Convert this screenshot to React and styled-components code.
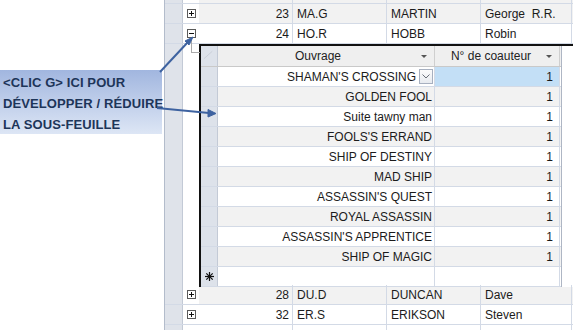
import styled, { createGlobalStyle } from 'styled-components';

const GlobalStyle = createGlobalStyle`
  html, body {
    margin: 0;
    padding: 0;
    background: #fff;
    overflow: hidden;
  }
  body {
    font-family: "Liberation Sans", Arial, sans-serif;
    font-size: 12px;
    color: #1b1b1b;
  }
`;

const outerRows = [
  { id: 23, code: 'MA.G', name: 'MARTIN', first: 'George  R.R.', open: false },
  { id: 24, code: 'HO.R', name: 'HOBB', first: 'Robin', open: true },
];

const afterRows = [
  { id: 28, code: 'DU.D', name: 'DUNCAN', first: 'Dave' },
  { id: 32, code: 'ER.S', name: 'ERIKSON', first: 'Steven' },
];

const books = [
  'SHAMAN\'S CROSSING',
  'GOLDEN FOOL',
  'Suite tawny man',
  'FOOLS\'S ERRAND',
  'SHIP OF DESTINY',
  'MAD SHIP',
  'ASSASSIN\'S QUEST',
  'ROYAL ASSASSIN',
  'ASSASSIN\'S APPRENTICE',
  'SHIP OF MAGIC',
];

const GRID = '#d3dae6';

const Page = styled.div`
  position: relative;
  display: flex;
  width: 579px;
  height: 330px;
  overflow: hidden;
`;

const Side = styled.div`
  width: 164px;
  flex: none;
`;

const Callout = styled.div`
  margin-top: 70px;
  width: 162px;
  height: 64px;
  box-sizing: border-box;
  padding: 2px 0 0 3px;
  background: linear-gradient(#a1b6df, #dde6f5);
  color: #1d3559;
  font-weight: bold;
  font-size: 13px;
  letter-spacing: 0.1px;
  line-height: 21px;
  white-space: nowrap;
`;

const Sheet = styled.div`
  width: 408px;
  flex: none;
  border-left: 1px solid #b3bccb;
`;

const Row = styled.div`
  display: grid;
  grid-template-columns: 18px 16px 94px 94px 94px 91px;
  height: ${(p) => p.$h || 20}px;
  box-sizing: border-box;
  background: ${(p) => (p.$alt ? '#f2f2f2' : '#fff')};
  border-bottom: 1px solid ${GRID};
  overflow: hidden;
`;

const Selector = styled.div`
  background: #dfe3ea;
  border-right: 1px solid #c3cad6;
`;

const Expander = styled.div`
  position: relative;
  display: flex;
  align-items: center;
  padding-left: 4px;
  background: #fff;
`;

const Cell = styled.div`
  display: flex;
  align-items: center;
  justify-content: ${(p) => (p.$right ? 'flex-end' : 'flex-start')};
  padding: ${(p) => (p.$right ? '0 3px 0 0' : '0 0 0 4px')};
  border-right: 1px solid ${GRID};
  white-space: pre;
  line-height: 1;
`;

const OpenBlock = styled.div`
  display: grid;
  grid-template-columns: 18px 16px 374px;
  height: 241px;
`;

const TreeLine = styled.div`
  position: relative;
  &::before {
    content: '';
    position: absolute;
    left: 8px;
    top: -6px;
    width: 8px;
    height: 14px;
    border-left: 1px solid #a9a9a9;
    border-bottom: 1px solid #a9a9a9;
  }
`;

const SubSheet = styled.div`
  border-top: 2px solid #111;
  border-left: 2px solid #111;
  background: #fff;
`;

const SubGrid = styled.div`
  width: 360px;
  border-right: 1px solid #aeb6c4;
`;

const SubRow = styled.div`
  display: grid;
  grid-template-columns: 17px 217px 125px;
  height: ${(p) => (p.$head ? 21 : 20)}px;
  box-sizing: border-box;
  border-bottom: 1px solid ${(p) => (p.$head ? '#c9c9c9' : GRID)};
  background: ${(p) => (p.$head ? '#efefef' : p.$alt ? '#f2f2f2' : '#fff')};
`;

const SubSelector = styled.div`
  display: flex;
  align-items: center;
  justify-content: center;
  background: #dde2ea;
  border-right: 1px solid #c3cad6;
`;

const HeadCell = styled.div`
  position: relative;
  display: flex;
  align-items: center;
  justify-content: center;
  padding-right: ${(p) => p.$pad || 16}px;
  border-right: 1px solid #cfcfcf;
  white-space: nowrap;
  color: #222;
`;

const DropArrow = styled.span`
  position: absolute;
  right: ${(p) => p.$right}px;
  top: 9px;
  width: 0;
  height: 0;
  border-left: 3px solid transparent;
  border-right: 3px solid transparent;
  border-top: 3px solid #555;
`;

const SubCell = styled.div`
  display: flex;
  align-items: center;
  justify-content: flex-end;
  gap: 3px;
  padding-right: ${(p) => p.$pr}px;
  border-right: 1px solid ${GRID};
  background: ${(p) => (p.$selected ? '#c3dff6' : 'transparent')};
  white-space: nowrap;
  line-height: 1;
`;

const Combo = styled.span`
  display: flex;
  align-items: center;
  justify-content: center;
  width: 14px;
  height: 15px;
  box-sizing: border-box;
  border: 1px solid #a7b0c0;
  background: linear-gradient(#fbfbfb, #e8ebf0);
`;

const Overlay = styled.svg`
  position: absolute;
  left: 0;
  top: 0;
  pointer-events: none;
`;

const ToggleBox = ({ open }) => (
  <svg width="9" height="9" viewBox="0 0 9 9">
    <rect x="0.5" y="0.5" width="8" height="8" fill="#fff" stroke="#5a5a5a" />
    <line x1="2" y1="4.5" x2="7" y2="4.5" stroke="#111" />
    {!open && <line x1="4.5" y1="2" x2="4.5" y2="7" stroke="#111" />}
  </svg>
);

const Star = () => (
  <svg width="9" height="9" viewBox="0 0 9 9">
    <g stroke="#111" strokeWidth="1.2">
      <line x1="4.5" y1="0" x2="4.5" y2="9" />
      <line x1="0" y1="4.5" x2="9" y2="4.5" />
      <line x1="1.3" y1="1.3" x2="7.7" y2="7.7" />
      <line x1="7.7" y1="1.3" x2="1.3" y2="7.7" />
    </g>
  </svg>
);

const Chevron = () => (
  <svg width="8" height="5" viewBox="0 0 8 5">
    <polyline points="0.5,0.5 4,4 7.5,0.5" fill="none" stroke="#6a6f78" />
  </svg>
);

const Corner = () => (
  <svg width="17" height="20" viewBox="0 0 17 20">
    <line x1="3" y1="13" x2="12" y2="5" stroke="#c9ced8" />
  </svg>
);

const OuterRow = ({ r, alt }) => (
  <Row $alt={alt}>
    <Selector />
    <Expander>
      <ToggleBox open={r.open} />
    </Expander>
    <Cell $right>{r.id}</Cell>
    <Cell>{r.code}</Cell>
    <Cell>{r.name}</Cell>
    <Cell>{r.first}</Cell>
  </Row>
);

export default function App() {
  return (
    <>
      <GlobalStyle />
      <Page>
        <Side>
          <Callout>
            &lt;CLIC G&gt; ICI POUR
            <br />
            DÉVELOPPER / RÉDUIRE
            <br />
            LA SOUS-FEUILLE
          </Callout>
        </Side>
        <Sheet>
          <Row $h={4} $alt>
            <Selector />
            <Expander />
            <Cell />
            <Cell />
            <Cell />
            <Cell />
          </Row>
          {outerRows.map((r, i) => (
            <OuterRow key={r.id} r={r} alt={i === 0} />
          ))}
          <OpenBlock>
            <Selector />
            <TreeLine />
            <SubSheet>
              <SubGrid>
                <SubRow $head>
                  <SubSelector>
                    <Corner />
                  </SubSelector>
                  <HeadCell $pad={16}>
                    Ouvrage
                    <DropArrow $right={7} />
                  </HeadCell>
                  <HeadCell $pad={12}>
                    N° de coauteur
                    <DropArrow $right={7} />
                  </HeadCell>
                </SubRow>
                {books.map((b, i) => (
                  <SubRow key={b} $alt={i % 2 === 1}>
                    <SubSelector />
                    <SubCell $pr={i === 0 ? 1 : 2}>
                      {b}
                      {i === 0 && (
                        <Combo>
                          <Chevron />
                        </Combo>
                      )}
                    </SubCell>
                    <SubCell $pr={6} $selected={i === 0}>
                      1
                    </SubCell>
                  </SubRow>
                ))}
                <SubRow>
                  <SubSelector>
                    <Star />
                  </SubSelector>
                  <SubCell $pr={2} />
                  <SubCell $pr={6} />
                </SubRow>
              </SubGrid>
            </SubSheet>
          </OpenBlock>
          {afterRows.map((r, i) => (
            <OuterRow key={r.id} r={r} alt={i === 0} />
          ))}
          <Row $h={6}>
            <Selector />
            <Expander />
            <Cell />
            <Cell />
            <Cell />
            <Cell />
          </Row>
        </Sheet>
        <Overlay width="579" height="330" viewBox="0 0 579 330">
          <g stroke="#3d62a0" strokeWidth="2" fill="#3d62a0">
            <line x1="160" y1="72" x2="188" y2="42" />
            <polygon points="193,37 185,41 189,45" strokeWidth="1" />
            <line x1="157" y1="108" x2="209" y2="113" />
            <polygon points="216,113.5 208,109.5 208,117" strokeWidth="1" />
          </g>
        </Overlay>
      </Page>
    </>
  );
}
